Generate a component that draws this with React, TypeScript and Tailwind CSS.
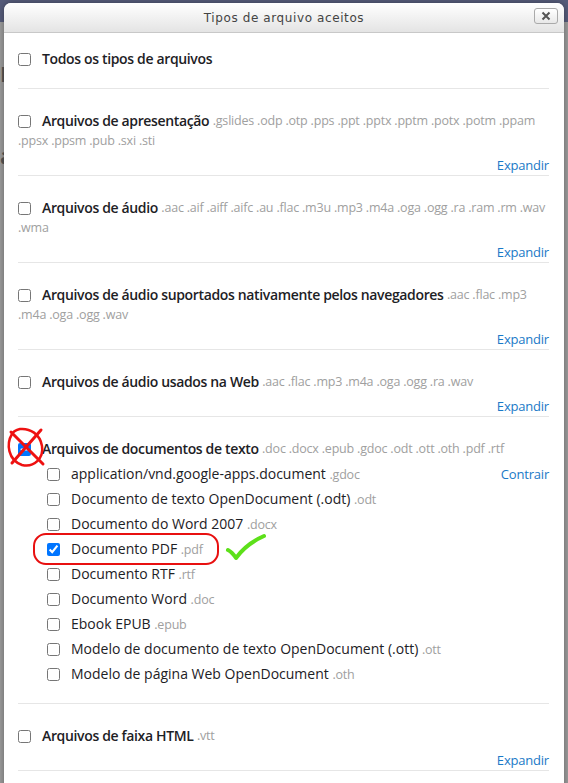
import { useEffect, useRef } from 'react';

type Section = {
  title: string;
  exts: string;
  children?: { name: string; ext: string; checked?: boolean }[];
};

const SECTIONS: Section[] = [
  {
    title: 'Arquivos de apresentação',
    exts: '.gslides .odp .otp .pps .ppt .pptx .pptm .potx .potm .ppam .ppsx .ppsm .pub .sxi .sti',
  },
  {
    title: 'Arquivos de áudio',
    exts: '.aac .aif .aiff .aifc .au .flac .m3u .mp3 .m4a .oga .ogg .ra .ram .rm .wav .wma',
  },
  {
    title: 'Arquivos de áudio suportados nativamente pelos navegadores',
    exts: '.aac .flac .mp3 .m4a .oga .ogg .wav',
  },
  {
    title: 'Arquivos de áudio usados na Web',
    exts: '.aac .flac .mp3 .m4a .oga .ogg .ra .wav',
  },
  {
    title: 'Arquivos de documentos de texto',
    exts: '.doc .docx .epub .gdoc .odt .ott .oth .pdf .rtf',
    children: [
      { name: 'application/vnd.google-apps.document', ext: '.gdoc' },
      { name: 'Documento de texto OpenDocument (.odt)', ext: '.odt' },
      { name: 'Documento do Word 2007', ext: '.docx' },
      { name: 'Documento PDF', ext: '.pdf', checked: true },
      { name: 'Documento RTF', ext: '.rtf' },
      { name: 'Documento Word', ext: '.doc' },
      { name: 'Ebook EPUB', ext: '.epub' },
      { name: 'Modelo de documento de texto OpenDocument (.ott)', ext: '.ott' },
      { name: 'Modelo de página Web OpenDocument', ext: '.oth' },
    ],
  },
  {
    title: 'Arquivos de faixa HTML',
    exts: '.vtt',
  },
];

function Box({ checked, indeterminate }: { checked?: boolean; indeterminate?: boolean }) {
  const ref = useRef<HTMLInputElement>(null);
  useEffect(() => {
    if (ref.current) ref.current.indeterminate = !!indeterminate;
  }, [indeterminate]);
  return (
    <input
      ref={ref}
      type="checkbox"
      defaultChecked={checked}
      className="m-0 w-[13px] h-[13px] align-[-2px] accent-[#0075ff]"
    />
  );
}

function Title({ text }: { text: string }) {
  return (
    <span className="ml-[11px] align-top leading-5 text-[14px] font-semibold tracking-[-0.35px] text-[#1d2125]">{text}</span>
  );
}

function TypeSection({ s }: { s: Section }) {
  return (
    <div className="border-b border-[#e6e6e6] pt-[22px]">
      <label className="block text-[13px] leading-5">
        <Box indeterminate={!!s.children} />
        <Title text={s.title} />{' '}
        <span className="align-top leading-5 text-[12.5px] tracking-[-0.2px] text-[#a0a0a0]">{s.exts}</span>
      </label>
      {s.children ? (
        <div className="mt-[3px] pb-[16px]">
          {s.children.map((c, i) => (
            <div key={c.name} className="flex items-center h-[25px] pl-[29px]">
              <Box checked={c.checked} />
              <span className="ml-[11px] leading-5 text-[14px] text-[#1d2125]">
                {c.name} <span className="text-[12.5px] tracking-[-0.2px] text-[#a0a0a0]">{c.ext}</span>
              </span>
              {i === 0 && <span className="ml-auto text-[13px] tracking-[-0.2px] text-[#1a79c7]">Contrair</span>}
            </div>
          ))}
        </div>
      ) : (
        <div className="mt-[4px] h-5 leading-5 text-right text-[13px] tracking-[-0.2px] text-[#1a79c7]">Expandir</div>
      )}
    </div>
  );
}

export default function App() {
  return (
    <div className="relative w-[568px] h-[783px] overflow-hidden bg-[#9b9b9b] font-['Open_Sans',sans-serif]">
      {/* page behind the dialog */}
      <div className="h-[22px] bg-[#565c7a]" />
      <div className="flex flex-col gap-[60px] pt-[40px] text-[#555] text-[22px] font-bold leading-none">
        <span>F</span>
        <span>a</span>
      </div>

      {/* dialog */}
      <div className="absolute left-[4px] top-[3px] w-[560px] h-[800px] bg-white rounded-t-[7px] shadow-[0_0_6px_rgba(0,0,0,0.35)]">
        <div className="relative h-[30px] flex items-center justify-center rounded-t-[7px] border-b border-[#c8c8c8] bg-gradient-to-b from-white to-[#e4e4e4]">
          <span className="text-[12px] tracking-[0.6px] text-[#444] font-['DejaVu_Sans',sans-serif]">Tipos de arquivo aceitos</span>
          <button className="absolute right-[6px] top-[5px] w-[24px] h-[16px] flex items-center justify-center rounded-[3px] border border-[#aaa] bg-gradient-to-b from-white to-[#e8e8e8]">
            <svg width="10" height="10" viewBox="0 0 10 10">
              <path d="M1.5 1.5 L8.5 8.5 M8.5 1.5 L1.5 8.5" stroke="#555" strokeWidth="2" />
            </svg>
          </button>
        </div>

        <div className="pl-[14px] pr-[15px]">
          <div className="border-b border-[#e6e6e6] pt-[16px] pb-[19px]">
            <label className="block text-[13px] leading-5">
              <Box />
              <Title text="Todos os tipos de arquivos" />
            </label>
          </div>
          {SECTIONS.map(s => (
            <TypeSection key={s.title} s={s} />
          ))}
        </div>
      </div>

      {/* annotations */}
      <svg className="absolute left-0 top-0 pointer-events-none" width="568" height="783">
        <path d="M12 434 C 6 444, 8 460, 22 465 C 34 468, 44 458, 42 446 C 40 434, 30 428, 20 429 C 16 430, 13 432, 12 434" fill="none" stroke="#ee1111" strokeWidth="2.5" />
        <path d="M11 432 L 43 464 M 41 430 L 12 463" fill="none" stroke="#ee1111" strokeWidth="3" strokeLinecap="round" />
        <rect x="34" y="534" width="184" height="30" rx="12" fill="none" stroke="#e81010" strokeWidth="2" />
        <path d="M228 550 Q 232 552, 236 558 Q 246 544, 264 536" fill="none" stroke="#5de01a" strokeWidth="4" strokeLinecap="round" strokeLinejoin="round" />
      </svg>
    </div>
  );
}
